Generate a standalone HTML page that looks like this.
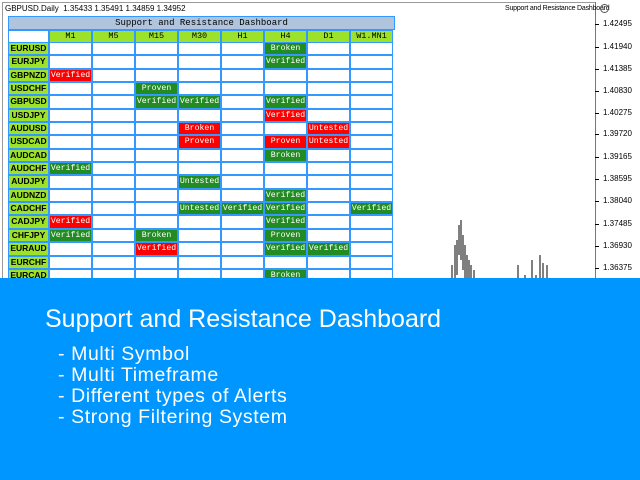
<!DOCTYPE html>
<html><head><meta charset="utf-8"><style>
*{margin:0;padding:0;box-sizing:border-box}
body{width:640px;height:480px;background:#fff;position:relative;overflow:hidden;font-family:"Liberation Sans",sans-serif}
.a{position:absolute}
#g{position:absolute;left:8px;top:42px;display:grid;grid-template-columns:41px repeat(8,43px);grid-auto-rows:13.35px}
#g div{border:1px solid #3399ff;background:#fff;font:8.2px "Liberation Mono",monospace;color:#fff;text-align:center;line-height:11px;white-space:nowrap;overflow:hidden}
#g div.s{background:#9de22a;color:#000;font:bold 8.5px "Liberation Sans",sans-serif;line-height:11px}
#g div.g{background:#228b22}
#g div.r{background:#ff0000}
.ax{position:absolute;left:603px;font-size:8px;color:#000}
.tk{position:absolute;left:595px;width:4px;height:1px;background:#000}
</style></head><body>
<div class="a" style="left:2px;top:2px;width:594px;height:278px;border:1px solid #999;border-bottom:none"></div>
<div class="a" style="left:595px;top:2px;width:1px;height:278px;background:#777"></div>
<div class="a" style="left:5px;top:4px;font-size:8px">GBPUSD.Daily&nbsp; 1.35433 1.35491 1.34859 1.34952</div>
<div class="a" style="left:505px;top:5px;font-size:7px;letter-spacing:-0.2px">Support and Resistance Dashboard</div>
<div class="a" style="left:600px;top:4px;width:9px;height:9px;border:1px solid #555;border-radius:50%"></div>
<div class="a" style="left:8px;top:16px;width:387px;height:14px;background:#b0c4de;border:1px solid #3399ff;font:9px 'Liberation Mono',monospace;text-align:center;line-height:12px">Support and Resistance Dashboard</div>
<div class="a" style="left:8px;top:30px;display:grid;grid-template-columns:41px repeat(8,43px);grid-auto-rows:13px;font:8.5px 'Liberation Mono',monospace">
<div style="border:1px solid #3399ff;background:#fff"></div>
<div style="border:1px solid #3399ff;background:#9de22a;text-align:center;line-height:11px">M1</div>
<div style="border:1px solid #3399ff;background:#9de22a;text-align:center;line-height:11px">M5</div>
<div style="border:1px solid #3399ff;background:#9de22a;text-align:center;line-height:11px">M15</div>
<div style="border:1px solid #3399ff;background:#9de22a;text-align:center;line-height:11px">M30</div>
<div style="border:1px solid #3399ff;background:#9de22a;text-align:center;line-height:11px">H1</div>
<div style="border:1px solid #3399ff;background:#9de22a;text-align:center;line-height:11px">H4</div>
<div style="border:1px solid #3399ff;background:#9de22a;text-align:center;line-height:11px">D1</div>
<div style="border:1px solid #3399ff;background:#9de22a;text-align:center;line-height:11px">W1.MN1</div>
</div>
<div id="g">
<div class="s">EURUSD</div><div></div><div></div><div></div><div></div><div></div><div class="g">Broken</div><div></div><div></div>
<div class="s">EURJPY</div><div></div><div></div><div></div><div></div><div></div><div class="g">Verified</div><div></div><div></div>
<div class="s">GBPNZD</div><div class="r">Verified</div><div></div><div></div><div></div><div></div><div></div><div></div><div></div>
<div class="s">USDCHF</div><div></div><div></div><div class="g">Proven</div><div></div><div></div><div></div><div></div><div></div>
<div class="s">GBPUSD</div><div></div><div></div><div class="g">Verified</div><div class="g">Verified</div><div></div><div class="g">Verified</div><div></div><div></div>
<div class="s">USDJPY</div><div></div><div></div><div></div><div></div><div></div><div class="r">Verified</div><div></div><div></div>
<div class="s">AUDUSD</div><div></div><div></div><div></div><div class="r">Broken</div><div></div><div></div><div class="r">Untested</div><div></div>
<div class="s">USDCAD</div><div></div><div></div><div></div><div class="r">Proven</div><div></div><div class="r">Proven</div><div class="r">Untested</div><div></div>
<div class="s">AUDCAD</div><div></div><div></div><div></div><div></div><div></div><div class="g">Broken</div><div></div><div></div>
<div class="s">AUDCHF</div><div class="g">Verified</div><div></div><div></div><div></div><div></div><div></div><div></div><div></div>
<div class="s">AUDJPY</div><div></div><div></div><div></div><div class="g">Untested</div><div></div><div></div><div></div><div></div>
<div class="s">AUDNZD</div><div></div><div></div><div></div><div></div><div></div><div class="g">Verified</div><div></div><div></div>
<div class="s">CADCHF</div><div></div><div></div><div></div><div class="g">Untested</div><div class="g">Verified</div><div class="g">Verified</div><div></div><div class="g">Verified</div>
<div class="s">CADJPY</div><div class="r">Verified</div><div></div><div></div><div></div><div></div><div class="g">Verified</div><div></div><div></div>
<div class="s">CHFJPY</div><div class="g">Verified</div><div></div><div class="g">Broken</div><div></div><div></div><div class="g">Proven</div><div></div><div></div>
<div class="s">EURAUD</div><div></div><div></div><div class="r">Verified</div><div></div><div></div><div class="g">Verified</div><div class="g">Verified</div><div></div>
<div class="s">EURCHF</div><div></div><div></div><div></div><div></div><div></div><div></div><div></div><div></div>
<div class="s">EURCAD</div><div></div><div></div><div></div><div></div><div></div><div class="g">Broken</div><div></div><div></div>
</div>
<div class="ax" style="top:19px">1.42495</div><div class="tk" style="top:24px"></div>
<div class="ax" style="top:42px">1.41940</div><div class="tk" style="top:47px"></div>
<div class="ax" style="top:64px">1.41385</div><div class="tk" style="top:69px"></div>
<div class="ax" style="top:86px">1.40830</div><div class="tk" style="top:91px"></div>
<div class="ax" style="top:108px">1.40275</div><div class="tk" style="top:113px"></div>
<div class="ax" style="top:129px">1.39720</div><div class="tk" style="top:134px"></div>
<div class="ax" style="top:152px">1.39165</div><div class="tk" style="top:157px"></div>
<div class="ax" style="top:174px">1.38595</div><div class="tk" style="top:179px"></div>
<div class="ax" style="top:196px">1.38040</div><div class="tk" style="top:201px"></div>
<div class="ax" style="top:219px">1.37485</div><div class="tk" style="top:224px"></div>
<div class="ax" style="top:241px">1.36930</div><div class="tk" style="top:246px"></div>
<div class="ax" style="top:263px">1.36375</div><div class="tk" style="top:268px"></div>
<svg class="a" style="left:440px;top:215px" width="110" height="65"><g stroke="#000" stroke-width="1" fill="none">
<path d="M12 50V65M15 30V65M17 25V60M19 10V40M21 5V45M23 20V55M25 30V65M27 40V65M29 45V65M31 50V65M34 55V65M78 50V65M85 60V65M92 45V65M96 60V65M100 40V65M103 48V65M107 50V65"/></g></svg>
<div class="a" style="left:0;top:278px;width:640px;height:202px;background:#0096ff"></div>
<div class="a" style="left:45px;top:305px;color:#fff;font-size:25px">Support and Resistance Dashboard</div>
<div class="a" style="left:58px;top:344px;color:#fff;font-size:19.5px;line-height:21px;letter-spacing:0.6px">- Multi Symbol<br>- Multi Timeframe<br>- Different types of Alerts<br>- Strong Filtering System</div>
</body></html>
